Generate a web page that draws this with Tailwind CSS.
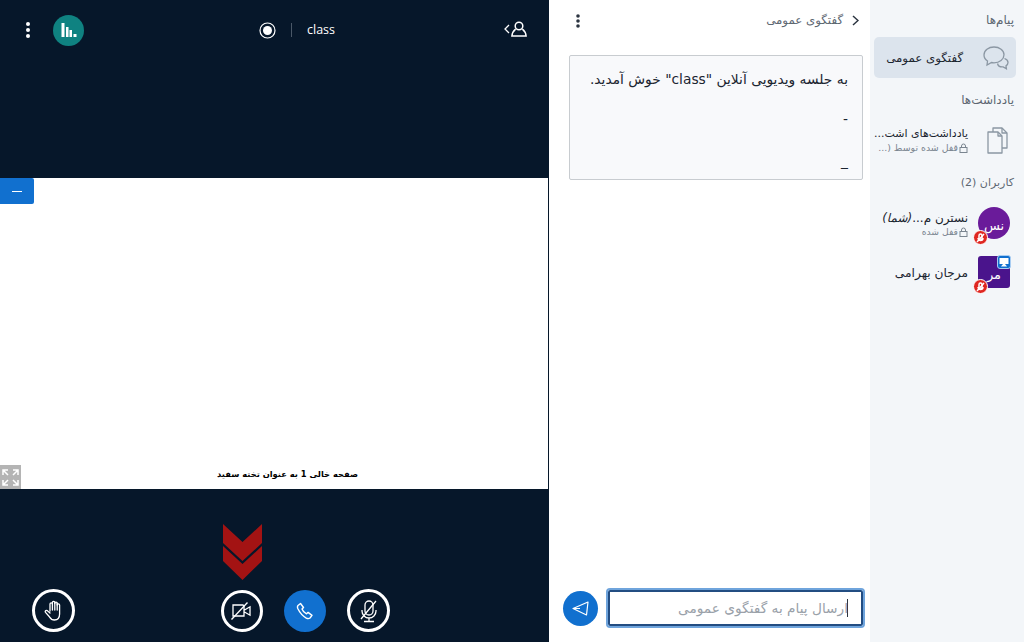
<!DOCTYPE html>
<html lang="fa">
<head>
  <meta charset="UTF-8">
  <title>class</title>
  <script src="https://cdn.jsdelivr.net/npm/@tailwindcss/browser@4"></script>
</head>
<body class="w-[1024px] h-[642px] overflow-hidden flex font-['DejaVu_Sans',sans-serif] bg-white">
  <!-- main area -->
  <main class="w-[549px] h-full flex flex-col bg-[#06172a] border-r border-[#06172a] shrink-0">
    <header class="h-[178px] shrink-0 flex items-start text-white">
      <div class="h-[60px] w-full flex items-center relative">
        <svg class="ml-[25px]" width="6" height="18" viewBox="0 0 6 18" fill="#fff"><circle cx="3" cy="3" r="2"/><circle cx="3" cy="9" r="2"/><circle cx="3" cy="15" r="2"/></svg>
        <div class="ml-[22px] w-[31px] h-[31px] rounded-full bg-[#0f8281] flex items-center justify-center">
          <svg width="16" height="16" viewBox="0 0 16 16" fill="#fff"><rect x="0.5" y="1" width="3" height="14"/><rect x="5" y="5" width="2.5" height="10"/><rect x="8.5" y="8" width="2.5" height="7"/><rect x="12.5" y="12" width="3" height="3"/></svg>
        </div>
        <div class="ml-[175px] flex items-center">
          <svg width="17" height="17" viewBox="0 0 17 17"><circle cx="8.5" cy="8.5" r="7.5" fill="none" stroke="#fff" stroke-width="1.2"/><circle cx="8.5" cy="8.5" r="4.5" fill="#fff"/></svg>
          <span class="ml-[15px] w-px h-[14px] bg-[#4a5868]"></span>
          <span class="ml-[15px] text-[12.5px] font-['Open_Sans'] text-white">class</span>
        </div>
        <div class="ml-auto mr-[21px] -mt-[2px] flex items-center gap-[1px]">
          <svg width="6" height="10" viewBox="0 0 6 10" fill="none" stroke="#fff" stroke-width="1.3"><path d="M5 1 1 5l4 4"/></svg>
          <svg width="16" height="16" viewBox="0 0 16 16" fill="none" stroke="#fff" stroke-width="1.5"><circle cx="8" cy="5" r="3.8"/><path d="M4.6 8.2C3 9.500 1.200 11.500.9 15h14.200c-.3-3.500-2.100-5.500-3.700-6.800"/></svg>
        </div>
      </div>
    </header>
    <section class="h-[311px] shrink-0 bg-white relative flex items-end justify-center">
      <p dir="rtl" class="mb-[8px] ml-[27px] text-[8.3px] font-bold text-black leading-[13px]">صفحه خالی 1 به عنوان تخته سفید</p>
      <button class="absolute left-0 top-0 w-[34px] h-[26px] bg-[#1170cf] rounded-r-[2px] flex items-center justify-center">
        <span class="w-[10px] h-px bg-white"></span>
      </button>
      <div class="absolute left-0 bottom-0 w-[21px] h-[24px] bg-[#b4b4b4] flex items-center justify-center">
        <svg width="17" height="17" viewBox="0 0 17 17" fill="none" stroke="#fff" stroke-width="1.5"><path d="M1 6V1h5M1 1l5 5M16 6V1h-5M16 1l-5 5M1 11v5h5M1 16l5-5M16 11v5h-5M16 16l-5-5"/></svg>
      </div>
    </section>
    <footer class="flex-1 relative flex items-end pb-[10px] pl-[32px]">
      <svg class="absolute left-[223px] top-[35px]" width="39" height="56" viewBox="0 0 39 56" fill="#a31313"><path d="M0 0 19.500 18 39 0v19L19.500 37 0 19z"/><path d="M0 22 19.500 40 39 22v15L19.500 56 0 37z"/></svg>
      <div class="w-[43px] h-[43px] rounded-full border-[3px] border-white flex items-center justify-center">
        <svg width="20" height="21" viewBox="0 0 20 21" fill="none" stroke="#fff" stroke-width="1.3" stroke-linejoin="round" stroke-linecap="round"><path d="M6 11V4a1.200 1.200 0 0 1 2.400 0V2.600a1.200 1.200 0 0 1 2.400 0V3.400a1.200 1.200 0 0 1 2.400 0V5a1.200 1.200 0 0 1 2.400 0v9c0 3.500-2 6-5.200 6-2.700 0-3.800-1.300-5-3.200L1.500 12.400c-.9-1.400 1-2.800 2.200-1.500L6 13"/><path d="M8.400 4v6M10.800 3v7M13.200 3.400V10"/></svg>
      </div>
      <div class="ml-[146px] flex items-center gap-[21px]">
        <div class="w-[42px] h-[42px] rounded-full border-[3px] border-white flex items-center justify-center">
          <svg width="24" height="20" viewBox="0 0 24 20" fill="none" stroke="#fff" stroke-width="1.3"><path d="M13 4H3v11h11V5zM14.500 9l5.500-3.200v8.400L14.500 11"/><path d="M1.500 18.500 17.500 1.500"/></svg>
        </div>
        <div class="w-[42px] h-[42px] rounded-full bg-[#1170cf] flex items-center justify-center">
          <svg width="18" height="18" viewBox="0 0 18 18" fill="none" stroke="#fff" stroke-width="1.4" stroke-linejoin="round"><path d="M2 3.500 4.500 1.500l3 4-1.500 1.600c.6 1.700 2.600 3.900 4.500 4.700l1.600-1.400 3.900 3-2 2.600c-1 .8-2.400.8-3.700.1C7 14.200 3.700 10.500 1.900 6.800 1.300 5.400 1.300 4.300 2 3.500z"/></svg>
        </div>
        <div class="w-[43px] h-[43px] rounded-full border-[3px] border-white flex items-center justify-center">
          <svg width="20" height="24" viewBox="0 0 20 24" fill="none" stroke="#fff" stroke-width="1.3"><rect x="6" y="2" width="8" height="14" rx="4"/><path d="M3 11v1a7 7 0 0 0 14 0v-1M10 19v3M5 22.500h10M2 20 17 2"/></svg>
        </div>
      </div>
    </footer>
  </main>

  <!-- chat panel -->
  <section class="w-[321px] h-full shrink-0 bg-white flex flex-col px-[20px] pb-[16px]">
    <div class="h-[55px] shrink-0 flex items-start justify-between pt-[11px]">
      <svg class="ml-[6px] mt-[2px]" width="6" height="16" viewBox="0 0 6 16" fill="#2b3440"><circle cx="3" cy="3" r="1.800"/><circle cx="3" cy="8" r="1.800"/><circle cx="3" cy="13" r="1.800"/></svg>
      <div class="flex items-center gap-[9px] -mr-[9px] mt-[1px]">
        <span dir="rtl" class="text-[11.800px] text-[#5d6772] leading-[16px]">گفتگوی عمومی</span>
        <svg width="7" height="11" viewBox="0 0 7 11" fill="none" stroke="#2b3440" stroke-width="1.500"><path d="M1 1 6 5.500 1 10"/></svg>
      </div>
    </div>
    <div dir="rtl" class="w-[294px] h-[125px] border border-[#c8ccd0] rounded-[2px] bg-[#f8f9fb] px-[14px] pt-[13px] text-[13.800px] text-[#1b2530] leading-[20px]">
      <p>به جلسه ویدیویی آنلاین "class" خوش آمدید.</p>
      <p class="mt-[20px]">-</p>
      <p class="mt-[22px]">_</p>
    </div>
    <div class="mt-auto flex items-center gap-[10px] -ml-[6px]">
      <button class="w-[35px] h-[35px] shrink-0 rounded-full bg-[#1170cf] flex items-center justify-center">
        <svg width="17" height="15" viewBox="0 0 17 15" fill="none" stroke="#fff" stroke-width="1.200" stroke-linejoin="round"><path d="M1 7.500 16 1l-1.500 13L1 7.500zM1 7.500h7"/></svg>
      </button>
      <div dir="rtl" class="w-[255px] h-[36px] shrink-0 bg-white border-2 border-[#234d82] outline-2 outline-[#6fa4dc] rounded-[2px] flex items-center pr-[13px] text-[13.700px] text-[#9aa1a9]">
        <span class="w-px h-[18px] bg-[#2b3440] -ml-px"></span>ارسال پیام به گفتگوی عمومی
      </div>
    </div>
  </section>

  <!-- user list -->
  <aside dir="rtl" class="flex-1 h-full bg-[#f3f6f9] flex flex-col text-[#1b2530]">
    <h2 class="mt-[12px] pr-[10px] text-[12px] text-[#5d6772] leading-[16px]">پیام‌ها</h2>
    <div class="mt-[9px] mr-[8px] w-[142px] h-[41px] rounded-[5px] bg-[#dce4ed] flex items-center pr-[7px]">
      <svg width="26" height="24" viewBox="0 0 26 24" fill="none" stroke="#8b97a3" stroke-width="1.300"><path d="M11 1C5.500 1 1 4.500 1 9c0 2.500 1.400 4.600 3.500 6L4 19l4.500-2.500c.8.200 1.600.300 2.500.300 5.500 0 10-3.500 10-8S16.500 1 11 1z"/><path d="M21.500 12.500c2 .7 3.500 2 3.500 4 0 1.500-.8 2.600-2 3.400l.4 2.800-3.200-1.800c-2.700.3-5.200-1-5.700-3.400"/></svg>
      <span class="mr-[20px] text-[11.800px] leading-[16px]">گفتگوی عمومی</span>
    </div>
    <h2 class="mt-[14px] pr-[10px] text-[12px] text-[#5d6772] leading-[16px]">یادداشت‌ها</h2>
    <div class="mt-[13px] mr-[16px] flex items-center h-[38px]">
      <svg class="shrink-0" width="21" height="27" viewBox="2 0 21 27" fill="none" stroke="#8b97a3" stroke-width="1.300" stroke-linejoin="round"><path d="M8 5V1h9l5 5v15h-5"/><path d="M17 1v5h5"/><path d="M3 5h10l4 4v17H3z"/><path d="M13 5v4h4"/></svg>
      <div class="mr-[19px] w-[94px]">
        <p class="text-[11px] leading-[16px] whitespace-nowrap">یادداشت‌های اشت...</p>
        <p class="flex items-center text-[9.400px] text-[#7a8590] leading-[12px] whitespace-nowrap">
          <svg width="9" height="10" viewBox="0 0 9 10" fill="none" stroke="#7a8590" class="ml-px"><rect x="1" y="4.500" width="7" height="5"/><path d="M2.500 4.500V3a2 2 0 0 1 4 0v1.500"/></svg>قفل شده توسط (...
        </p>
      </div>
    </div>
    <h2 class="mt-[16px] pr-[10px] text-[11px] text-[#5d6772] leading-[16px]">کاربران (2)</h2>
    <div class="mt-[16px] mr-[14px] flex items-center h-[32px]">
      <div class="relative w-[32px] h-[32px] rounded-full bg-[#6a1b9a] text-white text-[13px] flex items-end justify-center pb-[4px] shrink-0">نس
        <span class="absolute -left-[5px] -bottom-[6px] w-[15px] h-[15px] rounded-full bg-[#df2721] border border-white flex items-center justify-center">
          <svg width="9" height="10" viewBox="0 0 9 10" fill="none" stroke="#fff" stroke-width="1.500"><rect x="3" y="1" width="3" height="6" rx="1.500"/><path d="M1 9 8 1M2 5a2.500 2.500 0 0 0 5 0"/></svg>
        </span>
      </div>
      <div class="mr-[10px] w-[90px] pt-[2px]">
        <p class="text-[12px] leading-[16px] whitespace-nowrap">نسترن م...<i>(شما)</i></p>
        <p class="flex items-center text-[9.200px] text-[#7a8590] leading-[12px]">
          <svg width="9" height="10" viewBox="0 0 9 10" fill="none" stroke="#7a8590" class="ml-px"><rect x="1" y="4.500" width="7" height="5"/><path d="M2.500 4.500V3a2 2 0 0 1 4 0v1.500"/></svg>قفل شده
        </p>
      </div>
    </div>
    <div class="mt-[17px] mr-[14px] flex items-center h-[32px]">
      <div class="relative w-[32px] h-[32px] rounded-[3px] bg-[#4a148c] text-white text-[13px] flex items-end justify-center pb-[4px] shrink-0">مر
        <span class="absolute -right-[1px] -top-[1px] w-[14px] h-[14px] rounded-[3px] bg-[#1170cf] border border-[#a9cdf2] flex items-center justify-center">
          <svg width="10" height="10" viewBox="0 0 10 10" fill="#fff"><rect x="0.500" y="1" width="9" height="6"/><path d="M2 9.500 4 7h2l2 2.500z"/></svg>
        </span>
        <span class="absolute -left-[5px] -bottom-[6px] w-[15px] h-[15px] rounded-full bg-[#df2721] border border-white flex items-center justify-center">
          <svg width="9" height="10" viewBox="0 0 9 10" fill="none" stroke="#fff" stroke-width="1.500"><rect x="3" y="1" width="3" height="6" rx="1.500"/><path d="M1 9 8 1M2 5a2.500 2.500 0 0 0 5 0"/></svg>
        </span>
      </div>
      <p class="mr-[10px] mt-[2px] text-[12.200px] leading-[16px] whitespace-nowrap">مرجان بهرامی</p>
    </div>
  </aside>
</body>
</html>
